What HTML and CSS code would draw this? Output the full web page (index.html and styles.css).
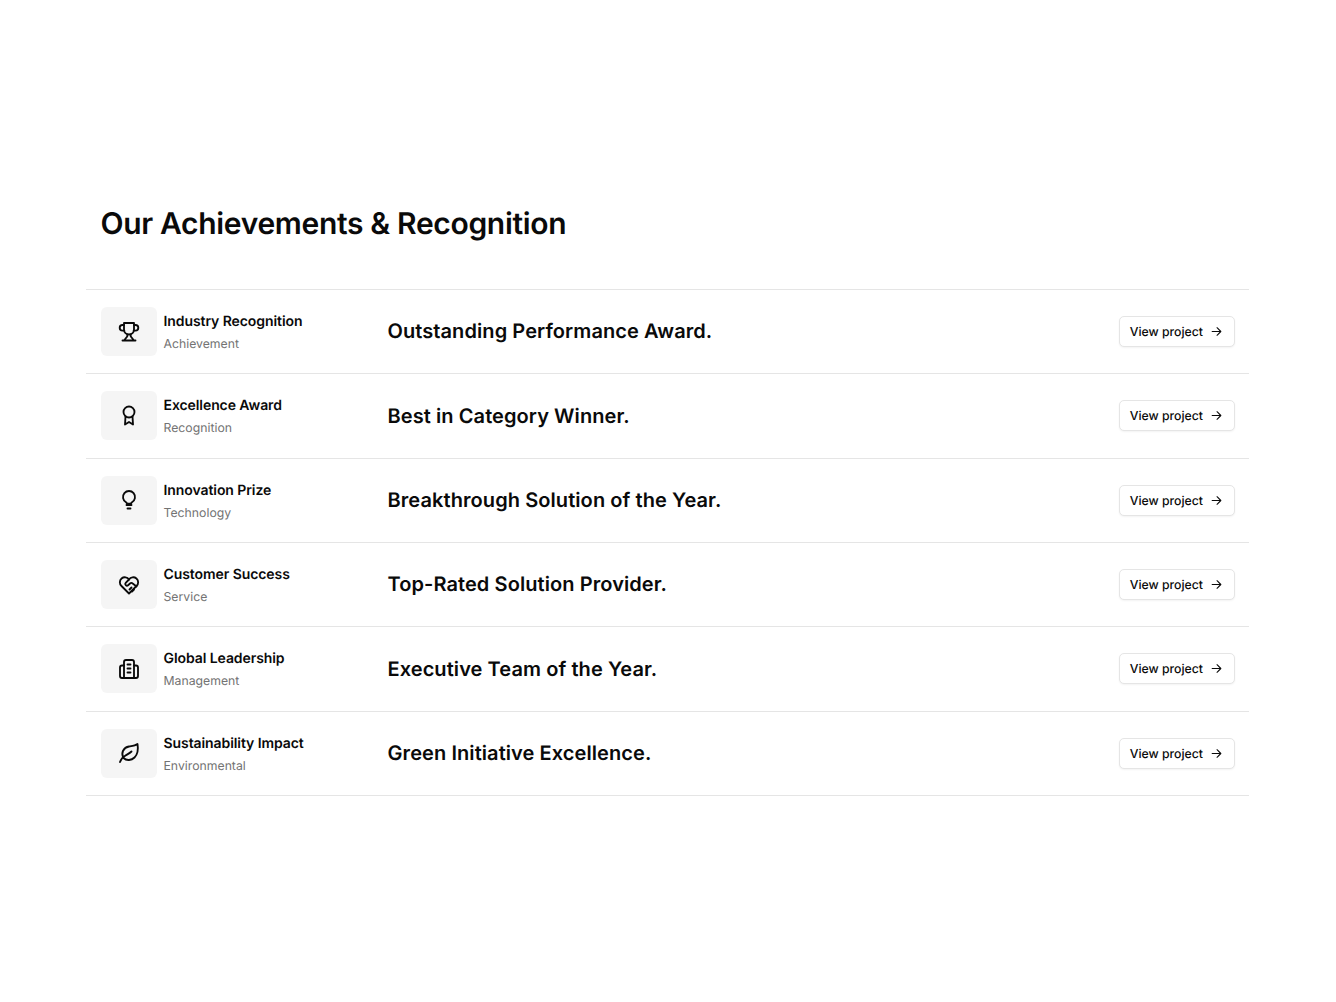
FILE: index.html
```html
<!DOCTYPE html>
<html lang="en">
<head>
<meta charset="utf-8">
<title>Our Achievements &amp; Recognition</title>
<link rel="stylesheet" href="styles.css">
</head>
<body>
<main class="section">
  <h1 class="heading">Our Achievements &amp; Recognition</h1>
  <ul class="list">
    <li class="row">
      <div class="meta">
        <span class="icon-box"><svg class="icon" viewBox="0 0 24 24"><path d="M7 3h10v6.500a5 5 0 0 1-10 0z"/><path d="M7 5H5.500a2.800 2.800 0 0 0 0 5.600h1.800M17 5h1.500a2.800 2.800 0 0 1 0 5.600h-1.800"/><path d="M10.500 14.500l-.3 2L7 20.500M13.500 14.500l.3 2 3.200 4M5.500 20.500h13"/></svg></span>
        <div class="meta-text"><span class="name">Industry Recognition</span><span class="kind">Achievement</span></div>
      </div>
      <h2 class="title">Outstanding Performance Award.</h2>
      <a class="btn" href="#">View project <svg class="arrow" viewBox="0 0 24 24"><path d="M4 12h16M13 5l7 7-7 7"/></svg></a>
    </li>
    <li class="row">
      <div class="meta">
        <span class="icon-box"><svg class="icon" viewBox="0 0 24 24"><circle cx="12" cy="8" r="5.500"/><path d="M8.500 12.500L8 20.500l4-2.500 4 2.500-.5-8"/></svg></span>
        <div class="meta-text"><span class="name">Excellence Award</span><span class="kind">Recognition</span></div>
      </div>
      <h2 class="title">Best in Category Winner.</h2>
      <a class="btn" href="#">View project <svg class="arrow" viewBox="0 0 24 24"><path d="M4 12h16M13 5l7 7-7 7"/></svg></a>
    </li>
    <li class="row">
      <div class="meta">
        <span class="icon-box"><svg class="icon" viewBox="0 0 24 24"><path d="M9 14.200a6 6 0 1 1 6 0c-.6.400-1 .8-1 1.500h-4c0-.7-.4-1.100-1-1.500z"/><path d="M9.500 17h5M10.500 20.500h3"/></svg></span>
        <div class="meta-text"><span class="name">Innovation Prize</span><span class="kind">Technology</span></div>
      </div>
      <h2 class="title">Breakthrough Solution of the Year.</h2>
      <a class="btn" href="#">View project <svg class="arrow" viewBox="0 0 24 24"><path d="M4 12h16M13 5l7 7-7 7"/></svg></a>
    </li>
    <li class="row">
      <div class="meta">
        <span class="icon-box"><svg class="icon" viewBox="0 0 24 24"><path d="M19.500 13L12 20.500 4.500 13A5 5 0 1 1 12 6.500 5 5 0 1 1 19.500 13"/><path d="M12 6.500L8.700 9.800a1.700 1.700 0 0 0 2.400 2.400l1.900-1.700a2 2 0 0 1 2.700 0l3.800 3M12.500 16.500l2-2M15 18.500l2-2"/></svg></span>
        <div class="meta-text"><span class="name">Customer Success</span><span class="kind">Service</span></div>
      </div>
      <h2 class="title">Top-Rated Solution Provider.</h2>
      <a class="btn" href="#">View project <svg class="arrow" viewBox="0 0 24 24"><path d="M4 12h16M13 5l7 7-7 7"/></svg></a>
    </li>
    <li class="row">
      <div class="meta">
        <span class="icon-box"><svg class="icon" viewBox="0 0 24 24"><path d="M7 21V5a2 2 0 0 1 2-2h6a2 2 0 0 1 2 2v16z"/><path d="M7 8.500H5A2 2 0 0 0 3 10.500V19a2 2 0 0 0 2 2h14a2 2 0 0 0 2-2v-8.500A2 2 0 0 0 19 8.500H17"/><path d="M10.500 7.500h3M10.500 11.500h3M10.500 15.500h3"/></svg></span>
        <div class="meta-text"><span class="name">Global Leadership</span><span class="kind">Management</span></div>
      </div>
      <h2 class="title">Executive Team of the Year.</h2>
      <a class="btn" href="#">View project <svg class="arrow" viewBox="0 0 24 24"><path d="M4 12h16M13 5l7 7-7 7"/></svg></a>
    </li>
    <li class="row">
      <div class="meta">
        <span class="icon-box"><svg class="icon" viewBox="0 0 24 24"><path d="M3 21c1-3 3-5 5.500-6.500S13 12 14.500 10.500"/><path d="M6.500 17C3.500 12 6.500 6.500 12 5.500c3.500-.6 6.500-1 8.500-2.500 1 6-.5 11-3 13.500-3 3-8 3.500-11 .5z"/></svg></span>
        <div class="meta-text"><span class="name">Sustainability Impact</span><span class="kind">Environmental</span></div>
      </div>
      <h2 class="title">Green Initiative Excellence.</h2>
      <a class="btn" href="#">View project <svg class="arrow" viewBox="0 0 24 24"><path d="M4 12h16M13 5l7 7-7 7"/></svg></a>
    </li>
  </ul>
</main>
</body>
</html>
```
FILE: styles.css
```css
* { box-sizing: border-box; }
html, body { margin: 0; padding: 0; background: #fff; }
body {
  font-family: Inter, "Liberation Sans", sans-serif;
  color: #0a0a0a;
  text-rendering: geometricPrecision;
  -webkit-font-smoothing: antialiased;
}
.section {
  width: 1163px;
  margin: 0 0 0 86px;
  padding-top: 205px;
}
.heading {
  margin: 0 0 45px;
  padding: 0 14.500px;
  font-size: 30px;
  line-height: 39px;
  font-weight: 600;
  letter-spacing: -0.330px;
}
.list {
  list-style: none;
  margin: 0;
  padding: 0;
  border-top: 1px solid #e5e5e5;
}
.row {
  display: grid;
  grid-template-columns: 287px 1fr auto;
  align-items: center;
  height: 84.330px;
  padding: 0 14px 0 14.500px;
  border-bottom: 1px solid #e5e5e5;
}
.meta { display: flex; align-items: center; gap: 7px; }
.icon-box {
  display: flex;
  align-items: center;
  justify-content: center;
  width: 56px;
  height: 49px;
  border-radius: 6px;
  background: #f5f5f5;
}
.icon {
  width: 24px;
  height: 24px;
  fill: none;
  stroke: #0a0a0a;
  stroke-width: 1.850;
  stroke-linecap: round;
  stroke-linejoin: round;
}
.meta-text { display: flex; flex-direction: column; gap: 2px; padding-top: 2.500px; }
.name { font-size: 14px; line-height: 20px; font-weight: 600; letter-spacing: -0.080px; }
.kind { font-size: 12.250px; line-height: 20px; color: #737373; }
.title {
  margin: 0 0 0.500px;
  font-size: 20px;
  line-height: 28px;
  font-weight: 600;
  letter-spacing: 0.080px;
}
.btn {
  display: inline-flex;
  align-items: center;
  gap: 7px;
  height: 31px;
  padding: 0 11px 0 10px;
  border: 1px solid #e5e5e5;
  border-radius: 5px;
  background: #fff;
  box-shadow: 0 1px 2px rgba(0, 0, 0, 0.050);
  color: #0a0a0a;
  font-size: 12.250px;
  font-weight: 500;
  text-decoration: none;
}
.arrow {
  width: 13px;
  height: 13px;
  fill: none;
  stroke: #0a0a0a;
  stroke-width: 2;
  stroke-linecap: round;
  stroke-linejoin: round;
}
```
